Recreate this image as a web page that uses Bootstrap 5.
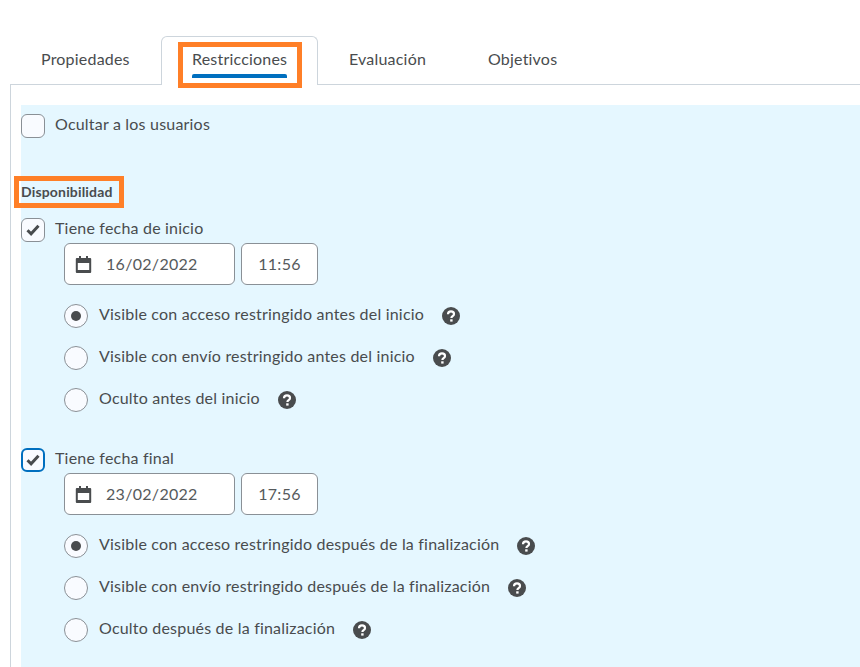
<!DOCTYPE html>
<html lang="es">
  <head>
    <meta charset="UTF-8" />
    <meta name="viewport" content="width=device-width, initial-scale=1.0" />
    <title>Restricciones</title>
    <link href="https://cdn.jsdelivr.net/npm/bootstrap@5.3.0/dist/css/bootstrap.min.css" rel="stylesheet" />
    <style>
      body {
  font-family: Lato, "Open Sans", sans-serif;
  font-size: 16px;
  letter-spacing: 0.2px;
  color: #494c4e;
  background: #fff;
  overflow: hidden;
}
.page-wrap {
  padding: 36px 0 0 10px;
}
.tab-strip {
  height: 49px;
  border-bottom: 1px solid #cdd5dc;
}
.tab-item {
  height: 49px;
  padding-top: 13px;
  line-height: 19px;
  color: #494c4e;
}
.tab-one { width: 151px; padding-left: 31px; }
.tab-two {
  width: 157px;
  padding-left: 30px;
  padding-top: 12px;
  background: #fff;
  border: 1px solid #cdd5dc;
  border-bottom: 0;
  border-radius: 6px 6px 0 0;
  position: relative;
}
.tab-three { width: 170px; padding-left: 31px; }
.tab-line {
  position: absolute;
  left: 30px;
  top: 37px;
  width: 95px;
  height: 4px;
  background: #006fbf;
  border-radius: 2px 2px 0 0;
}
.mark-box {
  position: absolute;
  border: 5px solid #ff7f27;
  pointer-events: none;
}
.mark-tab { left: 16px; top: 5px; width: 124px; height: 46px; }
.tab-panel {
  border-left: 1px solid #cdd5dc;
  padding: 20px 0 0 10px;
}
.blue-area {
  background: #e5f7ff;
  height: 562px;
  padding-top: 9px;
}
.check-row {
  height: 24px;
  line-height: 19px;
  gap: 10px;
}
.check-box {
  width: 24px;
  height: 24px;
  border: 1px solid #8a9096;
  border-radius: 6px;
  background: #f9fbff;
  flex: none;
}
.check-focus {
  border: 2px solid #006fbf;
}
.section-title {
  position: relative;
  width: 92px;
  font-size: 14px;
  font-weight: 700;
  line-height: 17px;
  letter-spacing: 0.17px;
  white-space: nowrap;
  margin: 45px 0 18px;
}
.mark-title { left: -7px; top: -7px; width: 110px; height: 32px; }
.date-row {
  padding: 1px 0 0 43px;
  gap: 6px;
}
.field-box {
  height: 42px;
  background: #fff;
  border: 1px solid #8a9096;
  border-radius: 6px;
  color: #565a5c;
  line-height: 40px;
  letter-spacing: 0.3px;
}
.field-date {
  width: 171px;
  padding-left: 10px;
  gap: 14px;
}
.field-time {
  width: 77px;
  text-align: center;
}
.radio-list {
  padding: 10px 0 0 43px;
}
.radio-row {
  height: 42px;
  gap: 11px;
}
.radio-dot {
  width: 24px;
  height: 24px;
  border: 1px solid #8a9096;
  border-radius: 50%;
  background: #f9fbff;
  flex: none;
}
.radio-on::after {
  content: "";
  width: 10px;
  height: 10px;
  border-radius: 50%;
  background: #494c4e;
}
.radio-text { position: relative; top: -2px; }
.help-icon {
  flex: none;
  margin-left: 7px;
}
.date-block + .date-block { margin-top: 27px; }
    </style>
  </head>
  <body>
    <div class="page-wrap">
      <div class="tab-strip d-flex">
        <div class="tab-item tab-one">Propiedades</div>
        <div class="tab-item tab-two">Restricciones<span class="tab-line"></span><span class="mark-box mark-tab"></span></div>
        <div class="tab-item tab-three">Evaluación</div>
        <div class="tab-item">Objetivos</div>
      </div>
      <div class="tab-panel">
        <div class="blue-area" id="area"></div>
      </div>
    </div>

    <script src="https://cdn.jsdelivr.net/npm/bootstrap@5.3.0/dist/js/bootstrap.bundle.min.js"></script>
    <script>
      const help = `<svg class="help-icon" width="18" height="18" viewBox="0 0 18 18"><circle cx="9" cy="9" r="9" fill="#494c4e"/><path d="M6 7.2C6 5.4 7.3 4.4 9 4.4c1.7 0 3 1 3 2.6 0 1.2-.7 1.7-1.4 2.2-.7.5-1.2.9-1.2 1.9" fill="none" stroke="#fff" stroke-width="2.2"/><rect x="8.2" y="12.3" width="2.4" height="2.3" fill="#fff"/></svg>`;
const tick = `<svg width="14" height="12" viewBox="0 0 14 12"><path d="M1.5 6.2l3.6 3.6 7.4-8" fill="none" stroke="#494c4e" stroke-width="3"/></svg>`;
const calendar = `<svg width="17" height="17" viewBox="0 0 17 17"><path d="M1.8 2H4V0h2v2h5V0h2v2h2.2a1 1 0 0 1 1 1v13a1 1 0 0 1-1 1H1.8a1 1 0 0 1-1-1V3a1 1 0 0 1 1-1zm1 5v7h11.4V7z" fill="#494c4e"/></svg>`;

const blocks = [
  {
    label: 'Tiene fecha de inicio',
    focus: false,
    date: '16/02/2022',
    time: '11:56',
    radios: ['Visible con acceso restringido antes del inicio', 'Visible con envío restringido antes del inicio', 'Oculto antes del inicio'],
  },
  {
    label: 'Tiene fecha final',
    focus: true,
    date: '23/02/2022',
    time: '17:56',
    radios: ['Visible con acceso restringido después de la finalización', 'Visible con envío restringido después de la finalización', 'Oculto después de la finalización'],
  },
];

function checkRow(text, checked, focus) {
  return `<div class="check-row d-flex">
      <span class="check-box d-flex align-items-center justify-content-center ${focus ? 'check-focus' : ''}">${checked ? tick : ''}</span>
      <span>${text}</span>
    </div>`;
}

document.getElementById('area').innerHTML =
  checkRow('Ocultar a los usuarios', false, false) +
  `<div class="section-title">Disponibilidad<span class="mark-box mark-title"></span></div>` +
  blocks
    .map(
      (b) => `<div class="date-block">
      ${checkRow(b.label, true, b.focus)}
      <div class="date-row d-flex">
        <div class="field-box field-date d-flex align-items-center">${calendar}<span>${b.date}</span></div>
        <div class="field-box field-time">${b.time}</div>
      </div>
      <div class="radio-list">
        ${b.radios
          .map(
            (r, i) => `<div class="radio-row d-flex align-items-center">
              <span class="radio-dot d-flex align-items-center justify-content-center ${i === 0 ? 'radio-on' : ''}"></span>
              <span class="radio-text">${r}</span>
              ${help}
            </div>`,
          )
          .join('')}
      </div>
      </div>`,
    )
    .join('');
    </script>
  </body>
</html>
